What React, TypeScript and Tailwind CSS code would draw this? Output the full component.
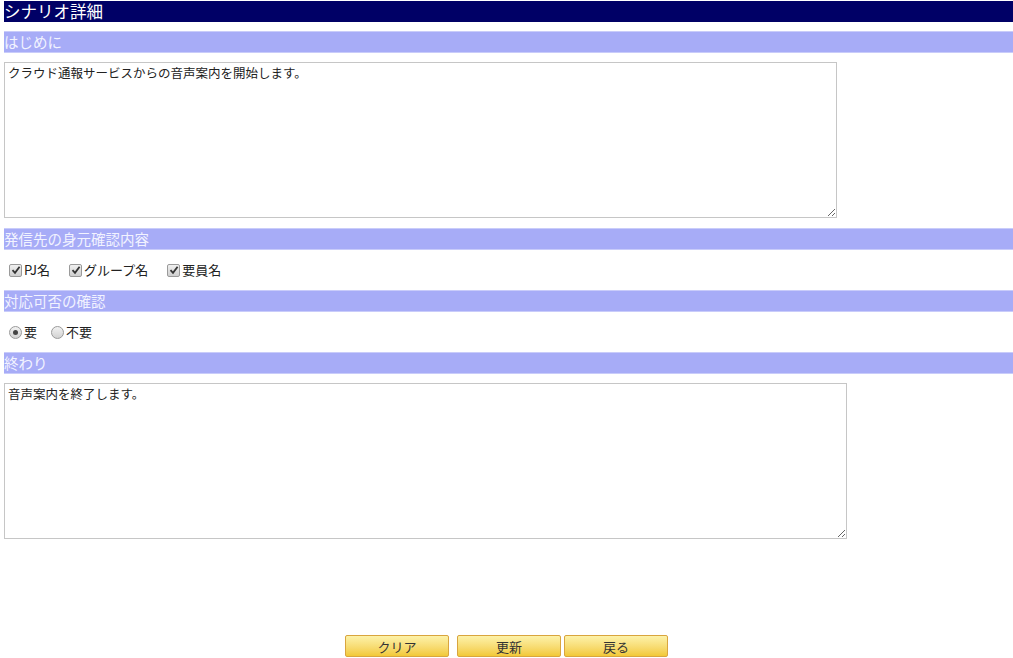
import { ReactNode } from "react"

const font = { fontFamily: '"Noto Sans CJK JP", "Noto Sans", sans-serif' }

function SectionBar({ children }: { children: ReactNode }) {
  return (
    <div className="ml-1 h-[22px] bg-[#a7acf7] border-y border-[#c9ccfa] flex items-center text-[14.5px] leading-none text-[#f2f3ff]">
      {children}
    </div>
  )
}

function Check({ label }: { label: string }) {
  return (
    <label className="flex items-center text-[13px] text-[#222]">
      <span className="w-[13px] h-[13px] rounded-[2px] border border-[#9a9a9a] bg-gradient-to-b from-[#f0f0f0] to-[#cfcfcf] flex items-center justify-center mr-[2px]">
        <svg width="10" height="10" viewBox="0 0 10 10">
          <path d="M1.5 5.2 L4 7.8 L8.6 1.8" stroke="#333" strokeWidth="1.8" fill="none" />
        </svg>
      </span>
      {label}
    </label>
  )
}

function Radio({ label, on }: { label: string; on?: boolean }) {
  return (
    <label className="flex items-center text-[13px] text-[#222]">
      <span className="w-[13px] h-[13px] rounded-full border border-[#9a9a9a] bg-gradient-to-b from-[#f2f2f2] to-[#d2d2d2] flex items-center justify-center mr-[2px]">
        {on && <span className="w-[5px] h-[5px] rounded-full bg-[#444]" />}
      </span>
      {label}
    </label>
  )
}

function Btn({ children, className = "" }: { children: ReactNode; className?: string }) {
  return (
    <button
      className={`w-[104px] h-[22px] rounded-[2px] border border-[#d9a53e] bg-gradient-to-b from-[#fdf2a8] to-[#f2c935] text-[13px] text-[#333] leading-none ${className}`}
    >
      {children}
    </button>
  )
}

export default function App() {
  return (
    <div className="w-[1013px] h-[658px] bg-white overflow-hidden pt-px" style={font}>
      <div className="ml-1 h-[21px] bg-[#000066] flex items-center text-[16.5px] leading-none text-white">シナリオ詳細</div>

      <div className="mt-[9px]">
        <SectionBar>はじめに</SectionBar>
      </div>
      <textarea
        className="block ml-1 mt-[9px] w-[833px] h-[156px] border border-[#c6c6c6] px-[3px] py-px text-[12.5px] text-[#222] outline-none"
        defaultValue="クラウド通報サービスからの音声案内を開始します。"
        style={font}
      />

      <div className="mt-[10px]">
        <SectionBar>発信先の身元確認内容</SectionBar>
      </div>
      <div className="h-[40px] flex items-center pl-[9px] gap-[19px]">
        <Check label="PJ名" />
        <Check label="グループ名" />
        <Check label="要員名" />
      </div>

      <SectionBar>対応可否の確認</SectionBar>
      <div className="h-[40px] flex items-center pl-[9px] gap-[14px]">
        <Radio label="要" on />
        <Radio label="不要" />
      </div>

      <SectionBar>終わり</SectionBar>
      <textarea
        className="block ml-1 mt-[9px] w-[843px] h-[156px] border border-[#c6c6c6] px-[3px] py-px text-[12.5px] text-[#222] outline-none"
        defaultValue="音声案内を終了します。"
        style={font}
      />

      <div className="mt-[96px] flex justify-center">
        <Btn className="mr-[8px]">クリア</Btn>
        <Btn className="mr-[3px]">更新</Btn>
        <Btn>戻る</Btn>
      </div>
    </div>
  )
}
